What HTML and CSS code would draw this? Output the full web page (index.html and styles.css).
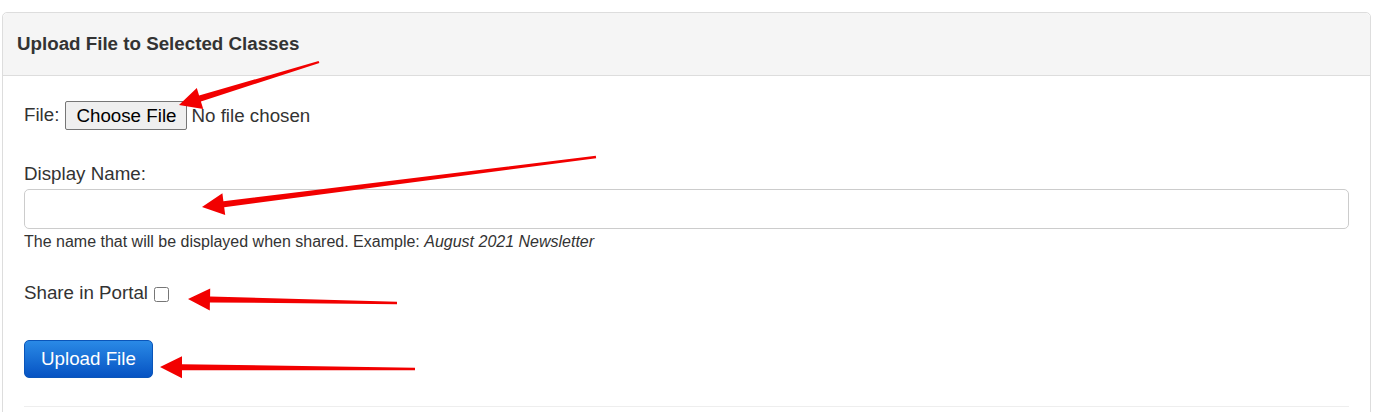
FILE: index.html
```html
<!DOCTYPE html>
<html lang="en">
    <head>
        <meta charset="UTF-8" />
        <meta name="viewport" content="width=device-width, initial-scale=1.0" />
        <title>Upload File to Selected Classes</title>
        <link rel="stylesheet" href="styles.css">
    </head>
    <body>
        <!-- Upload panel -->
        <div class="panel">
            <div class="panel-heading">Upload File to Selected Classes</div>
            <div class="panel-body">
                <div class="file-row">
                    <label for="file-input">File:</label>
                    <input type="file" id="file-input" class="file-input">
                </div>

                <div class="group">
                    <label for="display-name" class="field-label">Display Name:</label>
                    <input type="text" id="display-name" class="text-input">
                    <div class="help">The name that will be displayed when shared. Example: <em>August 2021 Newsletter</em></div>
                </div>

                <div class="share-row">
                    <label for="share-portal">Share in Portal</label>
                    <input type="checkbox" id="share-portal" class="check">
                </div>

                <button class="upload-btn">Upload File</button>

                <hr class="divider">
            </div>
        </div>

        <!-- Red annotation arrows drawn on top -->
        <svg class="arrows" width="1381" height="412" viewBox="0 0 1381 412">
            <polygon points="318.6,60.9 199.1,95.6 196.8,88.0 179,105 203.2,109.0 200.9,101.4 319.4,63.1" />
            <polygon points="595.8,155.8 223.4,201.2 222.4,193.3 202,207 225.2,215.1 224.2,207.2 596.2,158.2" />
            <polygon points="397,301.8 210.1,296.4 210.2,288.4 188,299 209.8,310.4 209.9,302.4 397,304.2" />
            <polygon points="415,367.8 182,364.2 182,356.2 160,367 182,378.2 182,370.2 415,370.2" />
        </svg>
    </body>
</html>
```

FILE: styles.css
```css
/* Page */
body {
    margin: 0;
    font-family: "Liberation Sans", Arial, sans-serif;
    font-size: 18.75px;
    line-height: 1.42857;
    color: #333;
    background-color: #fff;
}

/* Panel */
.panel {
    margin: 12px 10px 0 2px;
    border: 1px solid #ddd;
    border-radius: 5px;
}

.panel-heading {
    background-color: #f5f5f5;
    border-bottom: 1px solid #ddd;
    border-radius: 5px 5px 0 0;
    padding: 17px 14px 18px;
    line-height: 27px;
    font-weight: bold;
}

.panel-body {
    padding: 25px 21px 20px;
}

/* File row */
.file-row {
    display: flex;
    align-items: center;
    gap: 6px;
    height: 29px;
}

.file-input {
    font-family: inherit;
    font-size: 18.75px;
    color: #333;
}

.file-input::file-selector-button {
    font-family: inherit;
    font-size: 18.75px;
    height: 29px;
    padding: 0 10px;
    margin-right: 4px;
    color: #000;
    background-color: #efefef;
    border: 1px solid #767676;
    border-radius: 2px;
}

/* Display name */
.group {
    margin-top: 31px;
}

.field-label {
    display: block;
    margin-bottom: 1px;
}

.text-input {
    display: block;
    box-sizing: border-box;
    width: 100%;
    height: 40px;
    margin: 0;
    border: 1px solid #ccc;
    border-radius: 5px;
    font-family: inherit;
    font-size: 18.75px;
}

.help {
    margin-top: 2px;
    font-size: 16px;
    line-height: 22px;
    color: #333;
}

/* Share row */
.share-row {
    margin-top: 27px;
}

.check {
    width: 15px;
    height: 15px;
    margin: 0 0 0 1px;
    vertical-align: -3px;
}

/* Upload button */
.upload-btn {
    display: block;
    margin-top: 33px;
    height: 38px;
    padding: 0 16px;
    font-family: inherit;
    font-size: 18.75px;
    color: #fff;
    background: linear-gradient(#2a8ae6, #0653c3);
    border: 1px solid #0a55b9;
    border-radius: 5px;
}

.divider {
    margin: 28px 0 0;
    border: 0;
    border-top: 1px solid #eee;
}

/* Annotation overlay */
.arrows {
    position: absolute;
    top: 0;
    left: 0;
    pointer-events: none;
}

.arrows polygon {
    fill: #f20000;
}
```
